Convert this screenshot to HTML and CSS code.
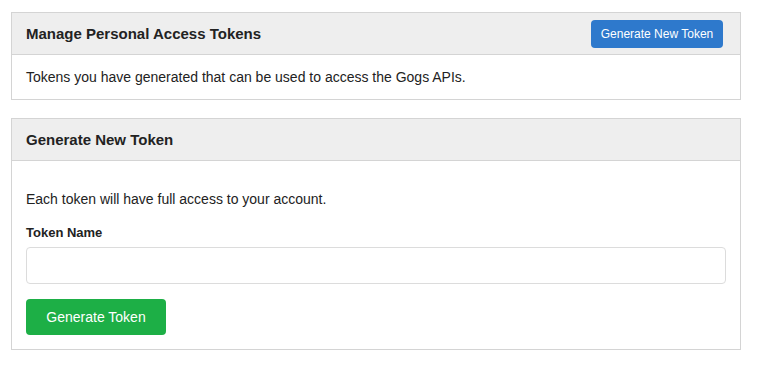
FILE: index.html
```html
<!DOCTYPE html>
<html lang="en">
<head>
  <meta charset="UTF-8" />
  <title>Applications - Gogs</title>
  <link rel="stylesheet" href="styles.css">
</head>
<body>
  <div class="panel">
    <div class="panel-header">
      <h4>Manage Personal Access Tokens</h4>
      <button class="btn btn-blue">Generate New Token</button>
    </div>
    <div class="panel-body">
      Tokens you have generated that can be used to access the Gogs APIs.
    </div>
  </div>

  <div class="panel">
    <div class="panel-header">
      <h4>Generate New Token</h4>
    </div>
    <div class="panel-body form-body">
      <p>Each token will have full access to your account.</p>
      <label for="name">Token Name</label>
      <input id="name" type="text" />
      <div>
        <button class="btn btn-green">Generate Token</button>
      </div>
    </div>
  </div>
</body>
</html>
```

FILE: styles.css
```css
* {
  box-sizing: border-box;
}

body {
  margin: 0;
  padding: 12px 16px 0 11px;
  font-family: "Liberation Sans", Arial, Helvetica, sans-serif;
  font-size: 14px;
  color: #333;
  background: #fff;
  width: 757px;
}

.panel {
  width: 730px;
  border: 1px solid #d4d4d4;
  margin-bottom: 18px;
}

.panel-header {
  display: flex;
  align-items: center;
  justify-content: space-between;
  height: 42px;
  padding: 0 17px 0 14px;
  background: #eeeeee;
  border-bottom: 1px solid #d4d4d4;
}

.panel-header h4 {
  margin: 0;
  font-size: 15px;
  font-weight: bold;
  color: #222;
}

.panel-body {
  padding: 13px 14px 13px;
  line-height: 18px;
  color: #222;
}

.form-body {
  padding: 28px 14px 14px;
}

.form-body p {
  margin: 0 0 14px;
  line-height: 20px;
}

.form-body label {
  display: block;
  font-size: 13px;
  font-weight: bold;
  line-height: 20px;
  margin-bottom: 4px;
  color: #222;
}

.form-body input {
  display: block;
  width: 700px;
  height: 37px;
  border: 1px solid #dcdcdc;
  border-radius: 4px;
  margin-bottom: 15px;
  font-family: inherit;
  font-size: 14px;
  padding: 0 10px;
}

.btn {
  border: none;
  border-radius: 4px;
  color: #fff;
  font-family: inherit;
  cursor: pointer;
}

.btn-blue {
  background: #2e79cc;
  font-size: 12px;
  width: 132px;
  height: 28px;
}

.btn-green {
  background: #1daf46;
  font-size: 14px;
  width: 140px;
  height: 36px;
}
```
